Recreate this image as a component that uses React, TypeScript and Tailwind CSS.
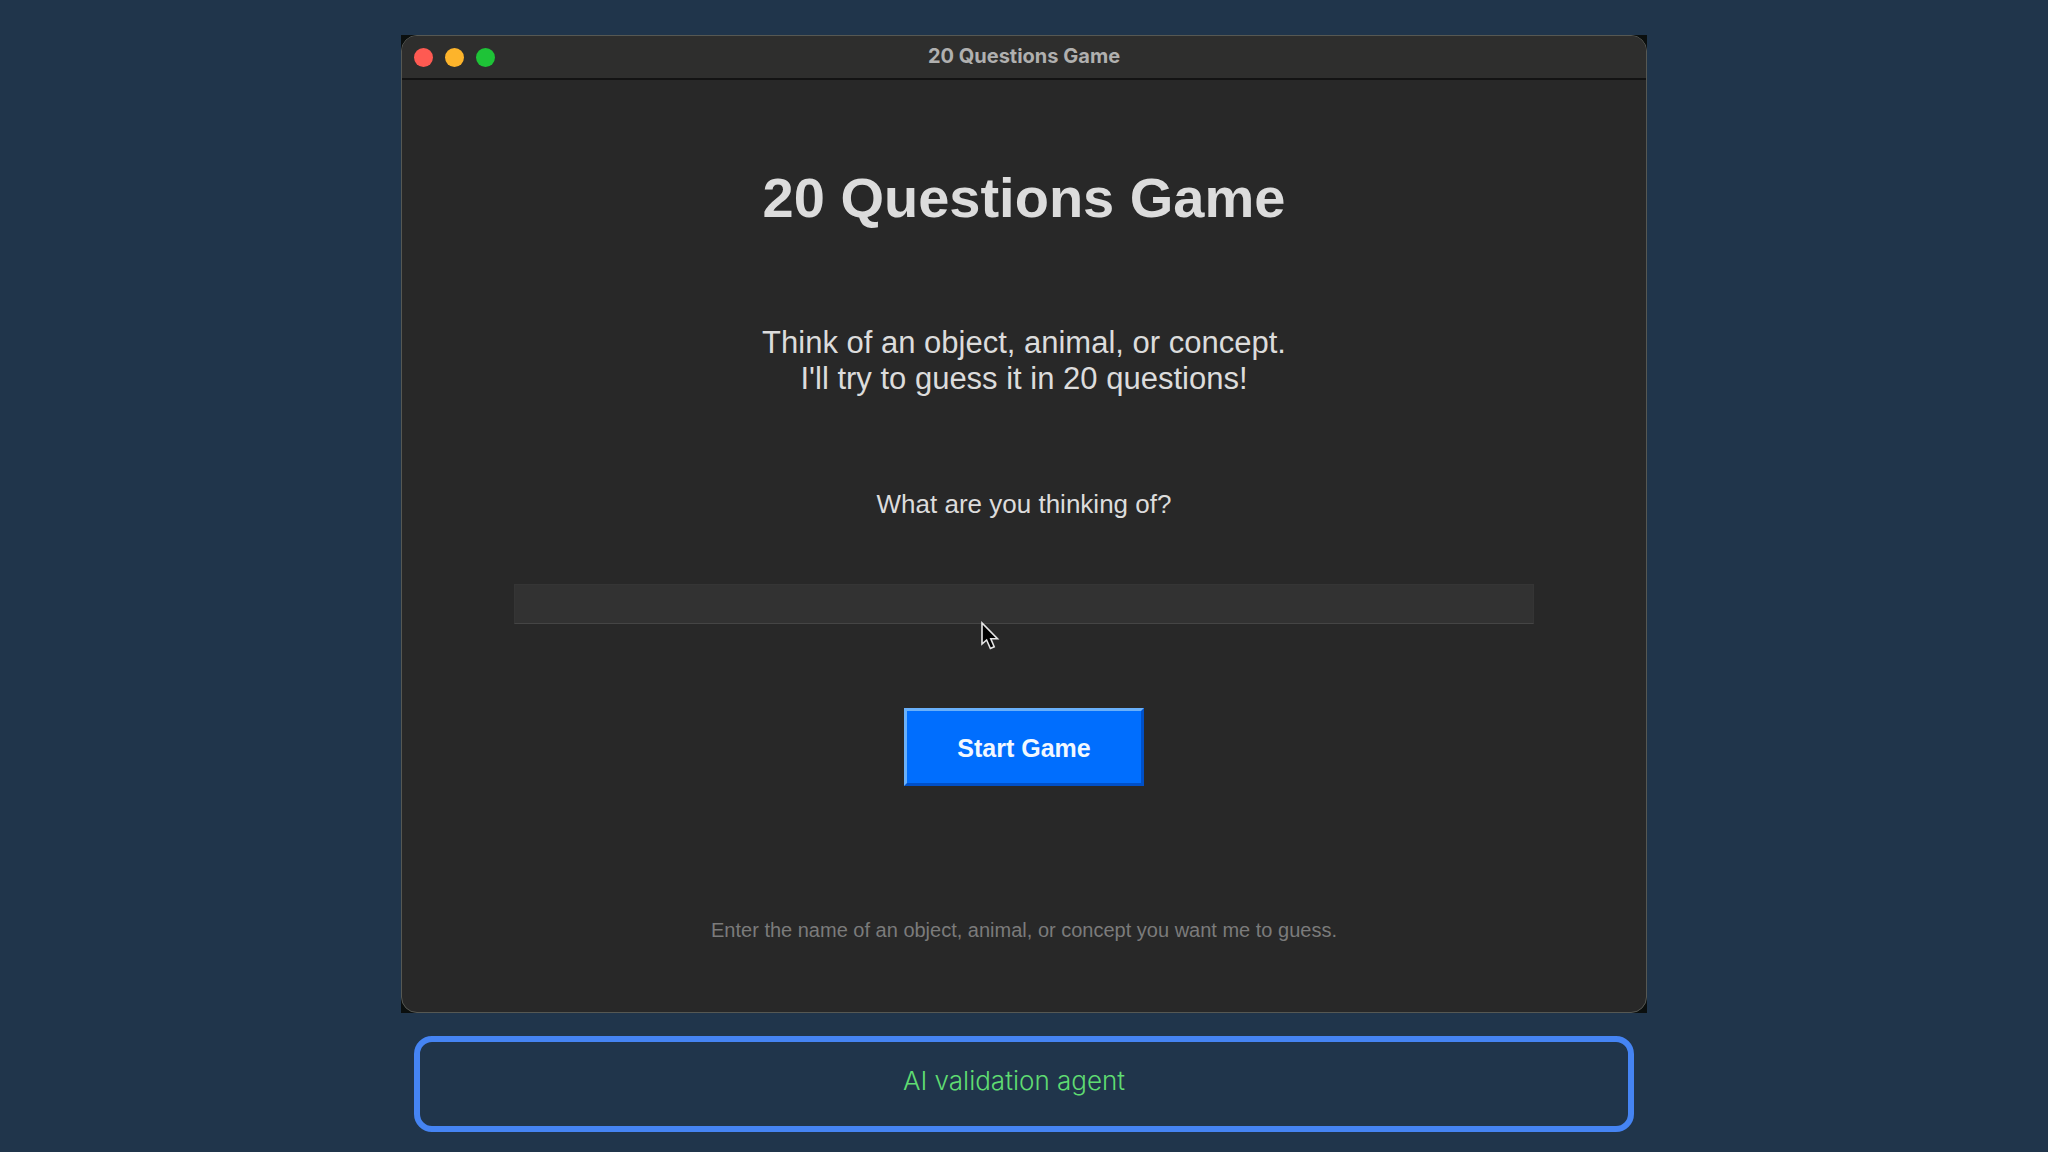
import { useState } from "react";

function TitleBar() {
  return (
    <header className="grid h-11 grid-cols-[1fr_auto_1fr] items-center border-b-2 border-[#131313] bg-[#2e2e2d] px-3">
      <div className="flex gap-3">
        <button type="button" aria-label="Close" className="size-[19px] rounded-full bg-[#fe5a52]" />
        <button type="button" aria-label="Minimize" className="size-[19px] rounded-full bg-[#fdb42b]" />
        <button type="button" aria-label="Zoom" className="size-[19px] rounded-full bg-[#1ec337]" />
      </div>
      <div className="pb-0.5 font-['Inter',sans-serif] text-[20px] leading-6 font-bold text-[#b0b0af]">
        20 Questions Game
      </div>
    </header>
  );
}

function Pointer() {
  return (
    <svg
      aria-hidden="true"
      className="pointer-events-none absolute top-[37px] left-[467px] h-[30px] w-5"
      viewBox="0 0 20 30"
    >
      <path
        d="M1 2V23L5.6 19L9.4 27.5L13.2 25.8L9.8 17.8H16.5Z"
        fill="#000"
        stroke="#e6e6e6"
        strokeWidth="1.6"
        strokeLinejoin="miter"
      />
    </svg>
  );
}

export default function App() {
  const [subject, setSubject] = useState("");

  return (
    <div className="flex min-h-screen flex-col items-center bg-[#20354b] px-4 pt-[35px] pb-5 font-['Liberation_Sans',Arial,sans-serif]">
      <div className="w-full max-w-[1246px] bg-[#0b0f0e]">
        <section className="overflow-hidden rounded-2xl border border-[#565853] bg-[#282828]">
          <TitleBar />
          <form
            className="flex flex-col items-center px-28 pt-[86px] pb-[70px] text-center text-[#dcdcdc]"
            onSubmit={(e) => e.preventDefault()}
          >
            <h1 className="text-[56px] leading-[64px] font-bold">20 Questions Game</h1>
            <p className="mt-[95px] text-[31px] leading-9">
              Think of an object, animal, or concept.
              <br />
              I'll try to guess it in 20 questions!
            </p>
            <label htmlFor="subject" className="mt-[91px] text-[26px] leading-8">
              What are you thinking of?
            </label>
            <div className="relative mt-16 w-full">
              <input
                id="subject"
                type="text"
                value={subject}
                onChange={(e) => setSubject(e.target.value)}
                className="block h-10 w-full border border-[#353535] border-b-[#454545] bg-[#323232] px-2 text-[26px] outline-none"
              />
              <Pointer />
            </div>
            <button
              type="submit"
              className="mt-[84px] h-[78px] w-60 border-3 border-t-[#69b0fa] border-r-[#0050c8] border-b-[#0050c8] border-l-[#69b0fa] bg-[#006efe] pt-1 text-[25px] font-bold text-[#f2f8ff]"
            >
              Start Game
            </button>
            <p className="mt-[132px] text-[20px] leading-6 text-[#7b7b7b]">
              Enter the name of an object, animal, or concept you want me to guess.
            </p>
          </form>
        </section>
      </div>
      <footer className="mt-[23px] flex h-24 w-full max-w-[1220px] items-center justify-center rounded-[18px] border-6 border-[#4584f3] pr-5 pb-1.5">
        <p className="font-['Inter',sans-serif] text-[26px] leading-8 font-light text-[#5fdc72]">
          AI validation agent
        </p>
      </footer>
    </div>
  );
}
